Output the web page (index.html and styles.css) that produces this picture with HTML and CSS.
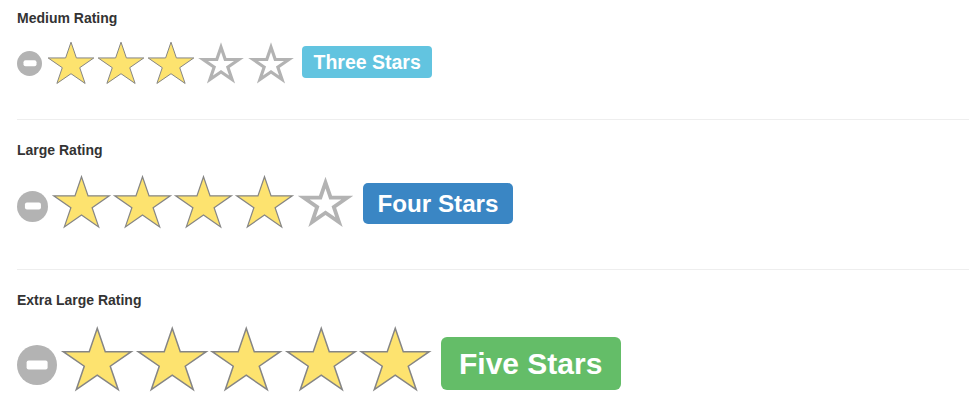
FILE: index.html
```html
<!DOCTYPE html>
<html>
<head>
<meta charset="utf-8">
<link rel="stylesheet" href="styles.css">
</head>
<body>
<svg class="sprite" xmlns="http://www.w3.org/2000/svg">
  <symbol id="s-full" viewBox="0 0 100 92">
    <polygon points="50,4.4 60.78,35.9 95.65,35.91 67.44,55.39 78.21,86.89 50,67.42 21.79,86.89 32.56,55.39 4.35,35.91 39.22,35.9" fill="#fde36f" stroke="#858585" stroke-width="2" stroke-linejoin="miter"/>
  </symbol>
  <symbol id="s-empty" viewBox="0 0 100 92">
    <path fill-rule="evenodd" fill="#b3b3b3" d="M50,4.4 L60.78,35.9 L95.65,35.91 L67.44,55.39 L78.21,86.89 L50,67.42 L21.79,86.89 L32.56,55.39 L4.35,35.91 L39.22,35.9 Z M50,24.01 L56.14,41.96 L76.02,41.97 L59.94,53.07 L66.08,71.03 L50,59.93 L33.92,71.03 L40.06,53.07 L23.98,41.97 L43.86,41.96 Z"/>
  </symbol>
</svg>
<div class="page">
  <section class="block">
    <div class="title">Medium Rating</div>
    <div class="rating rating-md">
      <span class="clear"></span>
      <span class="stars">
        <svg class="star" viewBox="0 0 100 92"><use href="#s-full"/></svg>
        <svg class="star" viewBox="0 0 100 92"><use href="#s-full"/></svg>
        <svg class="star" viewBox="0 0 100 92"><use href="#s-full"/></svg>
        <svg class="star" viewBox="0 0 100 92"><use href="#s-empty"/></svg>
        <svg class="star" viewBox="0 0 100 92"><use href="#s-empty"/></svg>
      </span>
      <span class="badge badge-info">Three Stars</span>
    </div>
  </section>
  <hr class="sep">
  <section class="block">
    <div class="title">Large Rating</div>
    <div class="rating rating-lg">
      <span class="clear"></span>
      <span class="stars">
        <svg class="star" viewBox="0 0 100 92"><use href="#s-full"/></svg>
        <svg class="star" viewBox="0 0 100 92"><use href="#s-full"/></svg>
        <svg class="star" viewBox="0 0 100 92"><use href="#s-full"/></svg>
        <svg class="star" viewBox="0 0 100 92"><use href="#s-full"/></svg>
        <svg class="star" viewBox="0 0 100 92"><use href="#s-empty"/></svg>
      </span>
      <span class="badge badge-primary">Four Stars</span>
    </div>
  </section>
  <hr class="sep">
  <section class="block">
    <div class="title">Extra Large Rating</div>
    <div class="rating rating-xl">
      <span class="clear"></span>
      <span class="stars">
        <svg class="star" viewBox="0 0 100 92"><use href="#s-full"/></svg>
        <svg class="star" viewBox="0 0 100 92"><use href="#s-full"/></svg>
        <svg class="star" viewBox="0 0 100 92"><use href="#s-full"/></svg>
        <svg class="star" viewBox="0 0 100 92"><use href="#s-full"/></svg>
        <svg class="star" viewBox="0 0 100 92"><use href="#s-full"/></svg>
      </span>
      <span class="badge badge-success">Five Stars</span>
    </div>
  </section>
</div>
</body>
</html>
```

FILE: styles.css
```css
html, body {
  margin: 0;
  padding: 0;
  background: #ffffff;
}

.sprite {
  display: none;
}

.page {
  padding: 8px 0 0 17px;
  font-family: "Liberation Sans", Arial, Helvetica, sans-serif;
  color: #333333;
}

.title {
  font-weight: bold;
  font-size: 14px;
  line-height: 20px;
  height: 20px;
  margin-bottom: 5px;
}

.sep {
  border: 0;
  border-top: 1px solid #eeeeee;
  height: 0;
  margin: 20px 0;
}

.rating {
  display: flex;
  align-items: center;
}

.stars {
  display: flex;
}

.star {
  display: block;
}

.clear {
  display: block;
  position: relative;
  border-radius: 50%;
  background: #b3b3b3;
  flex: none;
}

.clear::after {
  content: "";
  position: absolute;
  left: 50%;
  top: 50%;
  width: 52%;
  height: 23%;
  transform: translate(-50%, -50%);
  background: #ffffff;
  border-radius: 2px;
}

.badge {
  display: block;
  color: #ffffff;
  font-weight: bold;
  white-space: nowrap;
  text-align: center;
}

.badge-info { background: #62c4e0; }
.badge-primary { background: #3a86c4; }
.badge-success { background: #64bd68; }

/* medium */
.rating-md {
  padding: 7px 0 13px;
}
.rating-md .clear {
  width: 25px;
  height: 25px;
  margin-right: 4px;
}
.rating-md .star {
  width: 50px;
  height: 46px;
}
.rating-md .badge {
  margin-left: 6px;
  margin-bottom: 2px;
  font-size: 19.5px;
  line-height: 32px;
  height: 32px;
  padding: 0 11.5px;
  border-radius: 4px;
}

/* large */
.rating-lg {
  padding: 9px 0 19px;
}
.rating-lg .clear {
  width: 31px;
  height: 31px;
  margin-right: 3px;
  margin-top: 8px;
}
.rating-lg .star {
  width: 61px;
  height: 56px;
}
.rating-lg .badge {
  margin-left: 7px;
  margin-top: 3px;
  font-size: 24.2px;
  line-height: 41px;
  height: 41px;
  padding: 0 14.5px;
  border-radius: 5px;
}

/* extra large */
.rating-xl {
  padding: 10px 0 20px;
}
.rating-xl .clear {
  width: 40px;
  height: 40px;
  margin-right: 3px;
  margin-top: 11px;
}
.rating-xl .star {
  width: 74.5px;
  height: 68.5px;
}
.rating-xl .badge {
  margin-left: 8px;
  margin-top: 8px;
  font-size: 30px;
  line-height: 53px;
  height: 53px;
  padding: 0 18.5px;
  border-radius: 6px;
}
```
